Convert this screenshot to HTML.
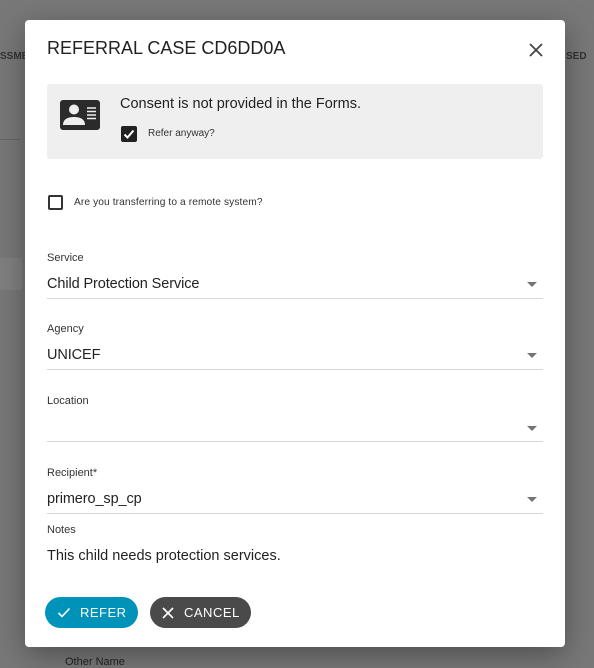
<!DOCTYPE html>
<html><head><style>
*{margin:0;padding:0;box-sizing:border-box}
body{width:594px;height:666px;background:#787878;font-family:"Liberation Sans",sans-serif;position:relative;overflow:hidden;color:#222}
.a{position:absolute}
.dlg{left:25px;top:20px;width:540px;height:627px;background:#fff;border-radius:4px;box-shadow:0 8px 30px rgba(0,0,0,.35)}
.lbl{font-size:11px;color:#333}
.val{font-size:14.5px;color:#222;letter-spacing:-.1px}
.line{height:1px;background:#d8d8d8;width:496px;left:22px}
.arr{width:0;height:0;border-left:5px solid transparent;border-right:5px solid transparent;border-top:5px solid #757575}
</style></head><body>
<div class="a" style="left:0;top:51px;font-size:10px;font-weight:bold;color:#333">SSME</div>
<div class="a" style="left:566px;top:51px;font-size:10px;font-weight:bold;color:#333">SED</div>
<div class="a" style="left:0;top:139px;width:20px;height:1px;background:#666"></div>
<div class="a" style="left:0;top:258px;width:22px;height:32px;background:#808080"></div>
<div class="a" style="left:65px;top:656px;font-size:11px;color:#222">Other Name</div>
<div class="a dlg">
 <div class="a" style="left:22px;top:18px;font-size:18px;color:#222">REFERRAL CASE CD6DD0A</div>
 <svg class="a" style="left:503px;top:22px" width="16" height="16" viewBox="0 0 16 16"><path d="M2 2L14 14M14 2L2 14" stroke="#444" stroke-width="1.8"/></svg>
 <div class="a" style="left:22px;top:64px;width:496px;height:75px;background:#efefef;border-radius:3px">
  <svg class="a" style="left:13px;top:16px" width="42" height="31" viewBox="0 0 42 31"><rect width="40" height="30" rx="3" fill="#2b2b2b"/><circle cx="14" cy="9.5" r="5" fill="#efefef"/><path d="M3 25c0-6 5-8 11-8s11 2 11 8z" fill="#efefef"/><path d="M27 8h9M27 11.5h9M27 15h9M27 18.5h9" stroke="#efefef" stroke-width="1.5"/></svg>
  <div class="a" style="left:73px;top:12px;font-size:14.5px;color:#222">Consent is not provided in the Forms.</div>
  <div class="a" style="left:74px;top:42px;width:16px;height:16px;background:#222;border-radius:2px"></div>
  <svg class="a" style="left:74px;top:42px" width="16" height="16" viewBox="0 0 16 16"><path d="M3.5 8.5l3 3 6-7" stroke="#fff" stroke-width="2" fill="none"/></svg>
  <div class="a" style="left:101px;top:44px;font-size:10px;color:#333">Refer anyway?</div>
 </div>
 <div class="a" style="left:23px;top:175px;width:15px;height:15px;border:2px solid #333;border-radius:2px"></div>
 <div class="a" style="left:49px;top:177px;font-size:10.2px;color:#333;letter-spacing:.1px">Are you transferring to a remote system?</div>

 <div class="a lbl" style="left:22px;top:232px">Service</div>
 <div class="a val" style="left:22px;top:256px">Child Protection Service</div>
 <div class="a arr" style="left:502px;top:262px"></div>
 <div class="a line" style="top:278px"></div>

 <div class="a lbl" style="left:22px;top:303px">Agency</div>
 <div class="a val" style="left:22px;top:327px">UNICEF</div>
 <div class="a arr" style="left:502px;top:333px"></div>
 <div class="a line" style="top:349px"></div>

 <div class="a lbl" style="left:22px;top:375px">Location</div>
 <div class="a arr" style="left:502px;top:406px"></div>
 <div class="a line" style="top:421px"></div>

 <div class="a lbl" style="left:22px;top:447px">Recipient*</div>
 <div class="a val" style="left:22px;top:471px">primero_sp_cp</div>
 <div class="a arr" style="left:502px;top:477px"></div>
 <div class="a line" style="top:493px"></div>

 <div class="a lbl" style="left:22px;top:504px">Notes</div>
 <div class="a val" style="left:22px;top:528px;letter-spacing:0">This child needs protection services.</div>

 <div class="a" style="left:20px;top:577px;width:93px;height:31px;background:#0093ba;border-radius:16px;color:#fff;font-size:13px">
  <svg class="a" style="left:12px;top:9px" width="14" height="13" viewBox="0 0 14 13"><path d="M1.5 7l3.5 3.5 7.5-8" stroke="#fff" stroke-width="1.6" fill="none"/></svg>
  <span class="a" style="left:35px;top:8px;letter-spacing:.5px">REFER</span></div>
 <div class="a" style="left:125px;top:577px;width:101px;height:31px;background:#4a4a4a;border-radius:16px;color:#fff;font-size:13px">
  <svg class="a" style="left:12px;top:10px" width="12" height="12" viewBox="0 0 12 12"><path d="M1 1l10 10M11 1L1 11" stroke="#fff" stroke-width="1.6"/></svg>
  <span class="a" style="left:34px;top:8px;letter-spacing:.5px">CANCEL</span></div>
</div>
</body></html>
